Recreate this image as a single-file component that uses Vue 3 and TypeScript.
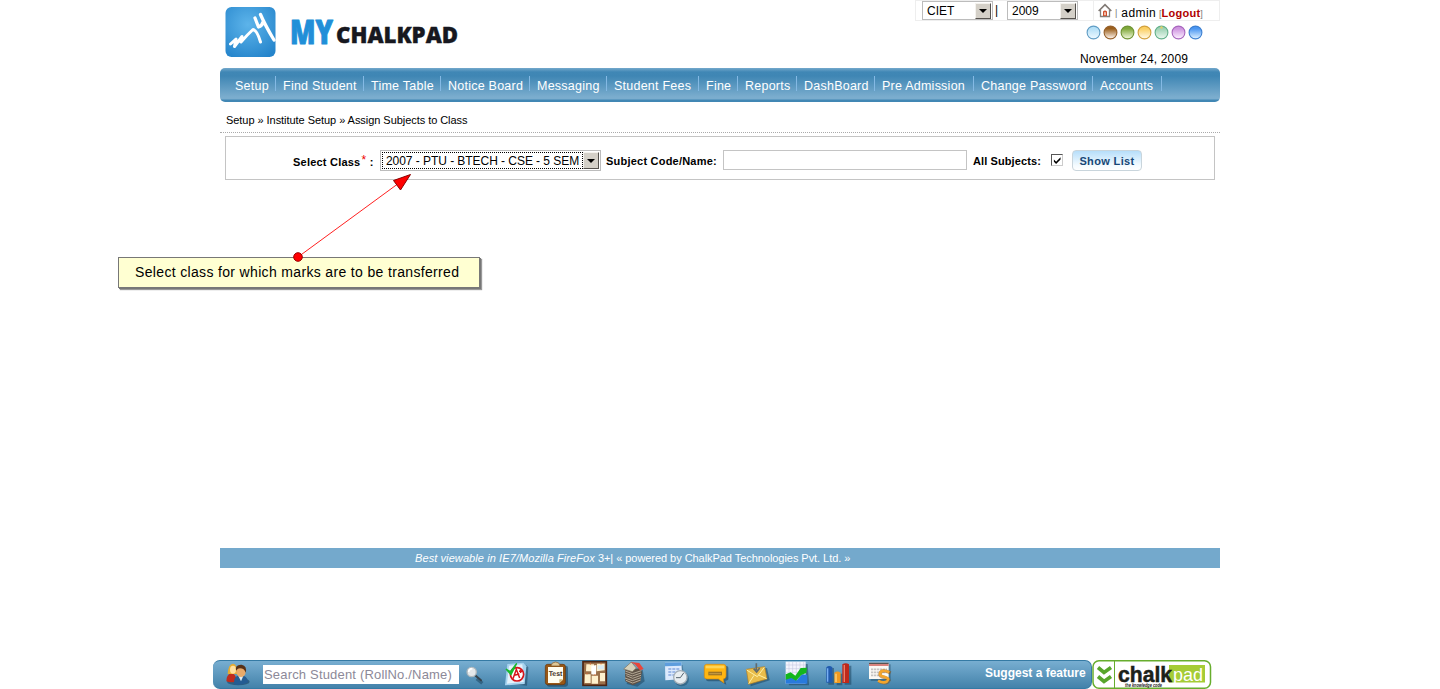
<script setup lang="ts">
const menu: string[] = [
  'Setup', 'Find Student', 'Time Table', 'Notice Board', 'Messaging', 'Student Fees',
  'Fine', 'Reports', 'DashBoard', 'Pre Admission', 'Change Password', 'Accounts',
]

interface Theme { id: string; rim: string; top: string; bottom: string }
const themes: Theme[] = [
  { id: 'sky', rim: '#5f9cc4', top: '#b5e0f7', bottom: '#e8f7ff' },
  { id: 'brown', rim: '#96602a', top: '#9a5f1c', bottom: '#f6e8dc' },
  { id: 'olive', rim: '#6f9434', top: '#7fa83a', bottom: '#e6f0cc' },
  { id: 'gold', rim: '#d2a03c', top: '#fbcf62', bottom: '#fff6dc' },
  { id: 'mint', rim: '#62b089', top: '#9ed2b4', bottom: '#e4f5ea' },
  { id: 'violet', rim: '#a765bd', top: '#cf95e0', bottom: '#f8e8fc' },
  { id: 'blue', rim: '#3c7fd0', top: '#4a96f2', bottom: '#cfe8ff' },
]
</script>

<template>
  <div class="screen">
    <div class="page">
      <header class="header">
        <svg class="logo" width="260" height="66" viewBox="0 0 260 66">
          <defs>
            <radialGradient id="tile" cx=".45" cy=".35" r=".75">
              <stop offset="0" stop-color="#5db4ea" />
              <stop offset="1" stop-color="#2484cb" />
            </radialGradient>
          </defs>
          <rect x="5.500" y="7" width="50" height="50" rx="6" fill="url(#tile)" />
          <path d="M10.500 44L16 39L14.500 46.500L22 36.500L21 42Q27 35 33 29.500Q37 30 40.500 42" fill="none" stroke="#fff" stroke-width="3" stroke-linecap="round" stroke-linejoin="round" />
          <path d="M35 18L38.500 27Q42 26 43 22M40.500 14.500Q45 25 54 40" fill="none" stroke="#fff" stroke-width="3.300" stroke-linecap="round" stroke-linejoin="round" />
          <text class="brand-my" x="70" y="44" textLength="43" lengthAdjust="spacingAndGlyphs">MY</text>
          <text class="brand-chalk" x="116" y="42.500" textLength="122" lengthAdjust="spacingAndGlyphs">CHALKPAD</text>
        </svg>
        <div class="account">
          <div class="account-row">
            <div class="pickers">
              <div class="combo"><span>CIET</span><i class="drop"></i></div>
              <span class="bar">|</span>
              <div class="combo"><span>2009</span><i class="drop"></i></div>
            </div>
            <div class="user">
              <svg width="14" height="15" viewBox="0 0 14 15">
                <path d="M2.5 7V13.5H11.5V7" fill="#fff" stroke="#85807b" stroke-width="1.3" />
                <path d="M.7 8L7 1.6L13.3 8" fill="none" stroke="#807974" stroke-width="1.7" />
                <path d="M5 13V8.5Q7 6.5 9 8.5V13Z" fill="#d0502e" /><rect x="6.2" y="9.2" width="1.6" height="3" fill="#f8d8c6" />
              </svg>
              <small>|</small><span class="name">admin</span>
              <span class="out"><small>[</small><b>Logout</b><small>]</small></span>
            </div>
          </div>
          <div class="themes">
            <svg v-for="t in themes" :key="t.id" width="15" height="15" viewBox="0 0 15 15">
              <linearGradient :id="t.id" x1="0" y1="0" x2="0" y2="1">
                <stop offset=".2" :stop-color="t.top" /><stop offset=".9" :stop-color="t.bottom" />
              </linearGradient>
              <circle cx="7.5" cy="7.5" r="6.4" :fill="`url(#${t.id})`" :stroke="t.rim" stroke-width="1.1" />
              <circle v-if="t.id === 'mint'" cx="7.5" cy="2.5" r="1.2" fill="#e2ce67" />
            </svg>
          </div>
          <div class="date">November 24, 2009</div>
        </div>
      </header>

      <nav class="menu">
        <a v-for="m in menu" :key="m">{{ m }}</a>
      </nav>

      <div class="crumbs">Setup » Institute Setup » Assign Subjects to Class</div>

      <form class="filter">
        <label class="class-label">Select Class<sup>*</sup> :</label>
        <div class="combo class-combo"><span>2007 - PTU - BTECH - CSE - 5 SEM</span><i class="drop"></i></div>
        <label class="subject-label">Subject Code/Name:</label>
        <div class="field"></div>
        <label class="all-label">All Subjects:</label>
        <span class="check">
          <svg width="9" height="9" viewBox="0 0 9 9"><path d="M1 3.5V6L3.5 8.5L8.5 3.5V.8L3.5 5.8Z" fill="#000" /></svg>
        </span>
        <button type="button" class="show">Show List</button>
      </form>

      <div class="content"></div>
      <footer class="footer"><em>Best viewable in IE7/Mozilla FireFox</em><span>3+| « powered by ChalkPad Technologies Pvt. Ltd. »</span></footer>
    </div>

    <div class="dock">
      <div class="tools">
        <svg class="people" width="26" height="25" viewBox="0 0 78 75">
          <ellipse cx="40" cy="59" rx="34" ry="11" fill="#163d58" opacity=".55" />
          <path d="M4 58Q4 38 18 34Q32 33 36 58Q20 64 4 58Z" fill="#c02b1d" />
          <path d="M8 36Q10 5 24 5Q38 6 36 36Z" fill="#e5ac31" /><ellipse cx="24" cy="23" rx="9" ry="12" fill="#ffe0a0" />
          <path d="M27 66Q25 42 44 40Q66 38 70 61Q46 73 27 66Z" fill="#245c92" />
          <path d="M39 40L48 58L56 40Z" fill="#e0ecf2" /><ellipse cx="48" cy="29" rx="14" ry="16" fill="#e8aa6a" />
          <path d="M33 26Q29 7 50 8Q67 11 62 32Q58 19 45 19Q38 19 33 26Z" fill="#573116" />
        </svg>
        <div class="search">Search Student (RollNo./Name)</div>
        <svg class="lens" width="21" height="22" viewBox="0 0 63 66">
          <path d="M35 41L52 55" stroke="#173e58" stroke-width="10" opacity=".5" /><path d="M32 32L48 46" stroke="#36424b" stroke-width="6" stroke-linecap="round" />
          <circle cx="20" cy="21" r="14" fill="#e4e8ea" stroke="#aeb7bc" stroke-width="4" /><path d="M11 21Q12 11 22 11" fill="none" stroke="#fff" stroke-width="5" />
        </svg>
        <div class="icons">
          <svg viewBox="3 30 120 87">
            <path d="M38 101L96 107L100 52L94 46Z" fill="#173e58" opacity=".5" /><path d="M37 42L85 38L94 49L89 102L30 106Z" fill="#a7d3ef" /><path d="M42 47L82 43L86 96L36 101Z" fill="#e5f2fb" />
            <circle cx="66" cy="73" r="20" fill="#fff" stroke="#d6151b" stroke-width="5" />
            <path d="M54 86L64 58L74 84M58 76L73 72M72 64H82M77 59V69" fill="none" stroke="#d6151b" stroke-width="4.500" />
            <path d="M33 57L46 65L65 40L48 74Z" fill="#18b92d" stroke="#18b92d" stroke-width="4" />
          </svg>
          <svg viewBox="123 30 120 87">
            <rect x="155" y="47" width="64" height="63" rx="7" fill="#173e58" opacity=".55" /><rect x="151" y="43" width="60" height="61" rx="7" fill="#985714" stroke="#663309" stroke-width="2" />
            <path d="M159 51H204V89L193 99H159Z" fill="#fffdf0" /><path d="M193 99V88H204" fill="#ceb777" />
            <path d="M168 48Q169 36 182 36Q194 36 195 48Z" fill="#dfc896" stroke="#79542b" stroke-width="2" />
            <text class="test" x="161" y="78" textLength="41" lengthAdjust="spacingAndGlyphs">Test</text>
          </svg>
          <svg viewBox="243 30 120 87">
            <rect x="264" y="35" width="70" height="71" fill="#9b714b" stroke="#4c2513" stroke-width="5" />
            <g fill="#fff1cd"><path d="M274 43H297V64H273ZM306 41H329V61L305 64ZM270 73H287V99H269ZM290 77H309V101H290ZM315 69H330V94H315Z" /></g>
            <path d="M289 48L304 45L303 75L289 73Z" fill="#fff" /><path d="M308 46H327V58H308Z" fill="#dcecf4" /><path d="M286 38V44M318 38V43M276 68V73M300 72V77" stroke="#d46b35" stroke-width="3" />
          </svg>
          <svg viewBox="363 30 120 87">
            <path d="M395 102L427 110L449 94L443 59L402 60Z" fill="#173e58" opacity=".5" /><path d="M390 59L434 55L441 65L436 95L413 106L391 94Z" fill="#5f5347" />
            <path d="M391 63L412 71L439 62M391 70L412 78L438 69M394 77L413 85L438 76M390 84L412 92L438 83M393 91L413 99L437 90" fill="none" stroke="#c2b6a1" stroke-width="2.600" />
            <path d="M386 57L409 36L424 54L412 65Z" fill="#d6d1ba" stroke="#7c705c" stroke-width="2" /><path d="M407 36L433 39L446 57L435 61L421 44Z" fill="#e8463b" />
          </svg>
          <svg viewBox="483 30 120 87">
            <path d="M516 45H563L568 89H518Z" fill="#173e58" opacity=".35" /><path d="M510 38L559 37L562 88L511 91Z" fill="#dceafd" /><path d="M510 38L559 37L560 47L510 49Z" fill="#5d9ddd" />
            <path d="M520 57H554M520 66H554M520 75H545" stroke="#9cb8e7" stroke-width="6" stroke-dasharray="9 3" />
            <circle cx="560" cy="87" r="22" fill="#173e58" opacity=".4" /><circle cx="556" cy="82" r="20" fill="#e8eef1" stroke="#a5b0b8" stroke-width="4" /><path d="M556 83L566 69M556 83L543 83" stroke="#54636e" stroke-width="3" />
          </svg>
          <svg viewBox="3 30 120 87">
            <path d="M37 48H96Q101 50 100 55V88Q98 93 91 92L94 104L75 94H39Q32 93 33 86Z" fill="#173e58" opacity=".55" />
            <path d="M34 43H86Q93 44 93 50V79Q92 87 85 87L87 99L70 87H36Q28 87 28 79V50Q28 44 34 43Z" fill="#ffb612" stroke="#d98a0b" stroke-width="2" />
            <path d="M32 47H88V55H32Z" fill="#ffd456" /><path d="M40 65H81V76H40Z" fill="#9d7425" /><path d="M43 71H78" stroke="#ddb45a" stroke-width="2" />
          </svg>
          <svg viewBox="123 30 120 87">
            <path d="M160 63L216 54L224 91L167 109Z" fill="#173e58" opacity=".5" /><path d="M154 58L209 50L216 87L161 103Z" fill="#e9bd4b" stroke="#b67d1b" stroke-width="2" />
            <path d="M155 60L187 80L208 52M161 101L177 76M215 86L191 75" fill="none" stroke="#fff0a6" stroke-width="3" />
            <path d="M184 40V61M176 56L185 66L194 54" fill="none" stroke="#606a6e" stroke-width="5" />
          </svg>
          <svg viewBox="243 30 120 87">
            <path d="M277 42H338L342 106H282Z" fill="#173e58" opacity=".5" /><path d="M272 35H332V101H272Z" fill="#f3f4fd" />
            <path d="M282 35V101M293 35V101M304 35V101M315 35V101M326 35V101M272 45H332M272 56H332M272 67H332" stroke="#bcc2dc" stroke-width="1.500" />
            <path d="M272 88L288 82L305 91L321 73L337 74V101H272Z" fill="#287adc" /><path d="M272 73L287 67L301 77L317 54L336 53L334 69L319 75L303 92L289 84L272 89Z" fill="#13b61d" />
          </svg>
          <svg viewBox="363 30 120 87">
            <path d="M400 54H417V104H400ZM425 71H442V106H425ZM449 47H469V104H449Z" fill="#173e58" opacity=".5" />
            <path d="M394 52Q403 44 412 52V98H394Z" fill="#215bae" /><path d="M398 55V95" stroke="#77aff4" stroke-width="4" />
            <path d="M418 68Q427 61 437 68V99H418Z" fill="#f29a1f" /><path d="M423 71V96" stroke="#ffd681" stroke-width="4" />
            <path d="M442 43Q452 36 462 43V99H442Z" fill="#bd281b" /><path d="M448 45V96" stroke="#ed7c65" stroke-width="4" />
          </svg>
          <svg viewBox="483 30 120 87">
            <path d="M527 43H587V93H527Z" fill="#173e58" opacity=".4" /><path d="M522 38H581V87H522Z" fill="#fbf9f5" /><path d="M522 41H581V48H522Z" fill="#d9837d" /><path d="M522 38H581V42H522Z" fill="#555" />
            <path d="M528 58H576M528 67H576M528 76H560" stroke="#c5c3c2" stroke-width="5" stroke-dasharray="7 2" />
            <path d="M587 69Q558 55 555 73Q554 80 570 83Q588 88 578 96Q568 102 551 93" fill="none" stroke="#8d5414" stroke-width="10" opacity=".55" /><path d="M583 67Q558 56 555 71Q554 78 570 81Q586 86 576 94Q566 101 549 92" fill="none" stroke="#f4a52d" stroke-width="8" />
          </svg>
        </div>
        <b class="suggest">Suggest a feature</b>
      </div>
      <svg class="chalkpad" width="120" height="29" viewBox="0 0 120 29">
        <rect x="1" y=".8" width="117.500" height="27.400" rx="6" fill="#fff" stroke="#67ad2d" stroke-width="1.500" />
        <path d="M22.500 1V28" stroke="#67ad2d" />
        <path d="M6 7.500L12 12.500L19 7.500M6 16.500L12 21.500L19 16.500" fill="none" stroke="#58a52b" stroke-width="3.600" />
        <rect x="77" y="5" width="36" height="17.500" fill="#a5cc35" />
        <text class="chalk" x="26" y="22" textLength="54" lengthAdjust="spacingAndGlyphs">chalk</text>
        <text class="pad" x="81" y="21" textLength="30" lengthAdjust="spacingAndGlyphs">pad</text>
        <text class="tag" x="33" y="26.500" textLength="37" lengthAdjust="spacingAndGlyphs">the knowledge code</text>
      </svg>
    </div>

    <div class="callout">Select class for which marks are to be transferred</div>
    <svg class="arrow" width="124" height="94" viewBox="290 170 124 94">
      <path d="M298 257L399 183" stroke="#ff2020" stroke-width="1" />
      <path d="M410.500 174.500L393.500 180.500L400.500 190Z" fill="#f00" stroke="#8a0000" stroke-width="1" />
      <circle cx="298" cy="257" r="4.300" fill="#f00" stroke="#900" />
    </svg>
  </div>
</template>

<style>
body { margin: 0; background: #fff; }
</style>

<style scoped>
.screen { position: relative; width: 1440px; height: 689px; overflow: hidden; background: #fff; color: #000; font: 12px/14px "Liberation Sans", Arial, sans-serif; display: flex; flex-direction: column; justify-content: space-between; }
.screen * { box-sizing: border-box; }
.page { width: 1000px; margin: 0 auto; }
.header { height: 68px; display: flex; justify-content: space-between; }
.logo { display: block; }
.brand-my { font: 800 34px "Open Sans", sans-serif; fill: #218fd8; stroke: #218fd8; stroke-width: 1; stroke-linejoin: round; }
.brand-chalk { font: 800 23px "Open Sans", sans-serif; fill: #171820; stroke: #171820; stroke-width: .4; stroke-linejoin: round; }
.account { width: 305px; }
.account-row { height: 21px; display: flex; border: 1px solid #eee; }
.pickers { width: 178px; display: flex; padding-left: 6px; border-right: 1px solid #eee; }
.combo { width: 71px; height: 19px; display: flex; justify-content: space-between; border: 1px solid #bcbcbc; background: #fff; padding: 1px; }
.combo span { padding-left: 3px; line-height: 17px; white-space: nowrap; }
.drop { width: 16px; height: 16px; flex: none; background: #d4d0c8; border: 1px solid; border-color: #f4f2ee #55524e #55524e #f4f2ee; display: flex; align-items: center; justify-content: center; }
.drop::after { content: ""; border: 4px solid transparent; border-top-color: #000; border-bottom-width: 0; }
.bar { width: 14px; padding-left: 2px; line-height: 19px; }
.user { display: flex; padding: 2px 0 0 4px; }
.user small { color: #777; font-size: 9px; line-height: 20px; }
.user > small { padding-left: 3px; }
.name { padding-left: 4px; line-height: 20px; letter-spacing: .4px; }
.out { padding-left: 3px; white-space: nowrap; line-height: 20px; }
.out b { color: #b00000; font-size: 11px; letter-spacing: .25px; }
.themes { display: flex; gap: 2px; padding: 4px 0 0 171px; height: 29px; }
.date { padding: 2px 0 0 165px; letter-spacing: .16px; }
.menu { height: 34px; padding-left: 8px; border-radius: 5px; background: linear-gradient(#74a9cc 0, #4087b5 4px, #3f86b4 8px, #7badce 29px, #7badce 31px, #4187b4 32px); display: grid; grid-template-columns: 48px 88px 77px 89px 77px 92px 39px 59px 78px 99px 119px 69px; }
.menu a { color: #fff; height: 15px; margin-top: 8px; padding-left: 7px; border-right: 1px solid #84b9e4; font-size: 12.500px; line-height: 20px; letter-spacing: .24px; white-space: nowrap; }
.crumbs { height: 31px; border-bottom: 1px dotted #aaa; font-size: 11px; line-height: 36px; padding-left: 6px; letter-spacing: -.05px; }
.filter { margin: 3px 5px 0; height: 44px; border: 1px solid #c4c4c4; display: flex; align-items: flex-start; padding: 13px 0 0 67px; }
.filter label { font-weight: 700; font-size: 11px; line-height: 22px; letter-spacing: .22px; white-space: nowrap; }
.filter sup { color: #e00; font-weight: 400; line-height: 0; vertical-align: 2px; font-size: 12px; padding-left: 1px; }
.filter .class-label { width: 87px; line-height: 24px; }
.class-combo { width: 221px; height: 21px; padding: 1px; }
.class-combo span { border: 1px dotted #000; width: 202px; padding-left: 3px; line-height: 16px; letter-spacing: -.05px; }
.class-combo .drop { height: 17px; }
.subject-label { width: 122px; padding-left: 5px; }
.field { width: 244px; height: 20px; border: 1px solid #c4c4c4; }
.all-label { width: 84px; padding-left: 6px; }
.filter .all-label { letter-spacing: .1px; }
.check { width: 12px; height: 12px; margin-top: 4px; border: 1px solid; border-color: #555 #ccc #ccc #555; display: flex; padding: 1px; }
.show { margin: 0 0 0 9px; width: 70px; height: 21px; padding: 0; border: 1px solid #c9d5dc; border-radius: 4px; background: linear-gradient(#b6defa, #f4fbff 75%, #fff); color: #174776; font: 700 11px/20px "Liberation Sans", Arial, sans-serif; letter-spacing: .35px; }
.content { height: 368px; }
.footer { height: 20px; background: #74a9cc; color: #fff; padding-left: 195px; font-size: 11px; line-height: 21px; white-space: nowrap; }
.footer em { letter-spacing: .09px; margin-right: 3px; }
.footer span { letter-spacing: -.05px; }
.dock { width: 1014px; height: 29px; margin-left: 213px; display: flex; }
.tools { width: 879px; height: 29px; display: flex; border: 1px solid #357aa4; border-width: 1px 1px 1px 0; border-radius: 7px; background: linear-gradient(#78aed1, #4382aa); }
.people { margin: 1px 0 0 12px; flex: none; }
.search { margin: 4px 0 0 12px; width: 196px; height: 19px; background: #fff; color: #8c8998; font-size: 13px; line-height: 20px; letter-spacing: .18px; padding-left: 1px; white-space: nowrap; flex: none; }
.lens { margin: 4px 0 0 6px; flex: none; }
.icons { display: grid; grid-template-columns: repeat(10, 40px); margin: -1px 0 0 10px; flex: none; }
.icons svg { width: 40px; height: 29px; display: block; }
.test { font: 700 21px "Liberation Sans", sans-serif; fill: #3e2b18; text-rendering: geometricPrecision; }
.suggest { color: #fff; font-size: 12px; line-height: 24px; margin-left: 89px; white-space: nowrap; }
.chalkpad { flex: none; }
.chalk { font: 700 22px "Liberation Sans", sans-serif; fill: #1c211a; stroke: #1c211a; stroke-width: .5; }
.pad { font: 400 18.500px "Liberation Sans", sans-serif; fill: #fff; }
.tag { font: italic 700 4.500px "Liberation Sans", sans-serif; fill: #222; }
.callout { position: absolute; left: 118px; top: 257px; width: 362px; height: 31px; border: 1px solid #777; background: #ffffd2; box-shadow: 1px 1px 0 #777, 2px 2px 1px #999; font-size: 14px; line-height: 29px; letter-spacing: .34px; padding-left: 16px; white-space: nowrap; }
.arrow { position: absolute; left: 290px; top: 170px; }
</style>
